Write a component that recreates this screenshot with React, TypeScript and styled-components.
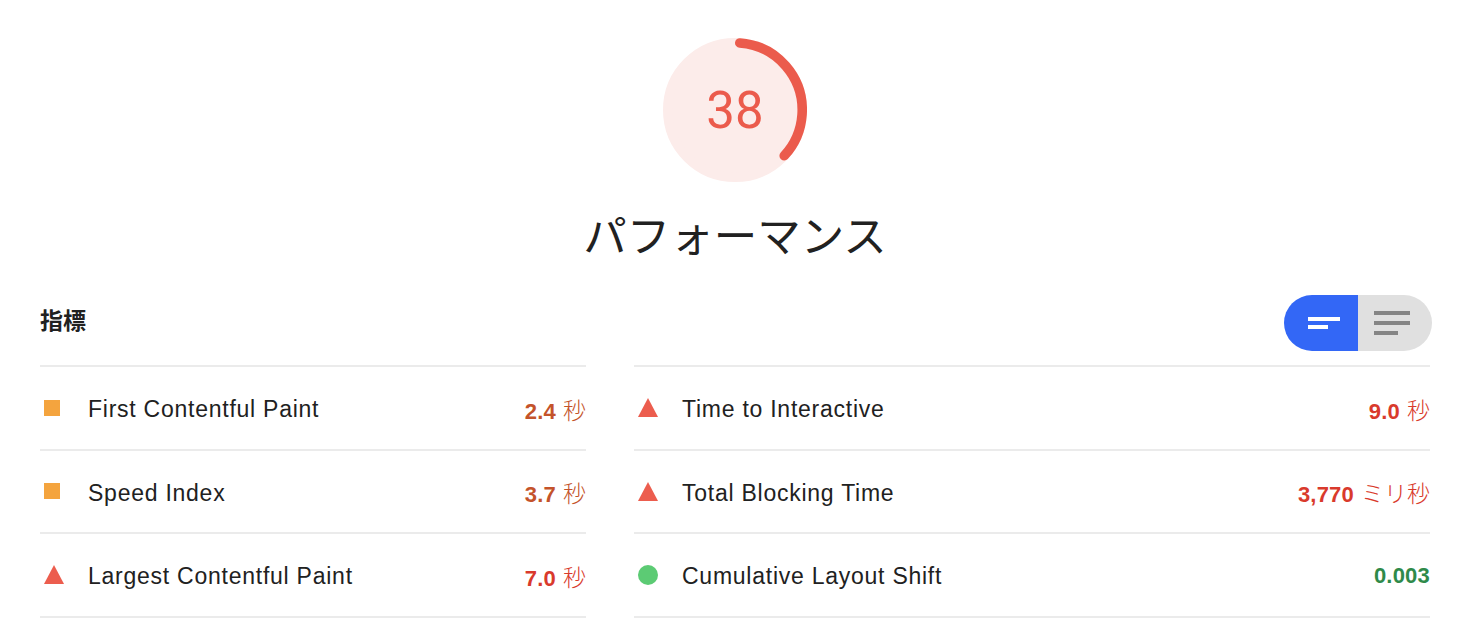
import React from "react";
import styled, { createGlobalStyle } from "styled-components";

const GlobalStyle = createGlobalStyle`
  html, body { margin: 0; padding: 0; background: #ffffff; }
  body {
    font-family: "Liberation Sans", Arial, "Noto Sans CJK JP", sans-serif;
    color: #212121;
  }
`;

const Page = styled.div`
  width: 1392px;
  margin-left: 40px;
  padding-top: 38px;
  display: flex;
  flex-direction: column;
`;

const Header = styled.div`
  display: flex;
  flex-direction: column;
  align-items: center;
  width: 1390px;
`;

const GaugeWrap = styled.div`
  position: relative;
  width: 144px;
  height: 144px;
`;

const GaugeSvg = styled.svg`
  display: block;
  width: 144px;
  height: 144px;
`;

const GaugeNumber = styled.div`
  position: absolute;
  inset: 0;
  display: flex;
  align-items: center;
  justify-content: center;
  font-family: Roboto, "Noto Sans", sans-serif;
  font-size: 51px;
  color: #eb5b4c;
  padding-top: 1px;
`;

const CategoryTitle = styled.h1`
  margin: 25px 0 0;
  font-family: "Noto Sans CJK JP", "Noto Sans", sans-serif;
  font-weight: 400;
  font-size: 43.5px;
  line-height: 54px;
  color: #212121;
`;

const MetricsHeader = styled.div`
  margin-top: 34px;
  display: flex;
  align-items: center;
  justify-content: space-between;
  height: 56px;
`;

const SectionTitle = styled.h2`
  margin: 0;
  font-family: "Liberation Sans", "Noto Sans CJK JP", sans-serif;
  font-size: 23px;
  font-weight: 700;
  color: #212121;
  position: relative;
  top: -4px;
`;

const Toggle = styled.div`
  display: flex;
  width: 148px;
  height: 56px;
  border-radius: 28px;
  overflow: hidden;
`;

const ToggleHalf = styled.button<{ $active?: boolean }>`
  flex: 1;
  border: 0;
  margin: 0;
  padding: ${(p) => (p.$active ? "0 0 0 6px" : "0 6px 0 0")};
  background: ${(p) => (p.$active ? "#3367f6" : "#e0e0e0")};
  display: flex;
  align-items: center;
  justify-content: center;
  cursor: pointer;
`;

const Grid = styled.div`
  margin-top: 14px;
  display: grid;
  grid-template-columns: 546px 796px;
  column-gap: 48px;
`;

const Column = styled.div`
  border-top: 2px solid #ebebeb;
`;

const Row = styled.div`
  display: flex;
  align-items: center;
  height: 81.5px;
  border-bottom: 2px solid #ebebeb;
`;

const IconBox = styled.div`
  width: 20px;
  margin-left: 4px;
  margin-right: 24px;
  display: flex;
  align-items: center;
`;

const Square = styled.span`
  display: block;
  width: 16px;
  height: 16px;
  background: #f4a43e;
`;

const Triangle = styled.span`
  display: block;
  width: 0;
  height: 0;
  border-left: 10px solid transparent;
  border-right: 10px solid transparent;
  border-bottom: 19px solid #ec5d4e;
`;

const Dot = styled.span`
  display: block;
  width: 20px;
  height: 20px;
  border-radius: 50%;
  background: #5ccb74;
`;

const Label = styled.span`
  flex: 1;
  font-size: 23px;
  letter-spacing: 0.75px;
  color: #212121;
  white-space: nowrap;
  position: relative;
  top: 2px;
`;

const Value = styled.span<{ $color: string }>`
  font-size: 22px;
  color: ${(p) => p.$color};
  white-space: nowrap;
  position: relative;
  top: 1px;
`;

const Num = styled.span`
  font-weight: 700;
  letter-spacing: 0.2px;
`;

const Unit = styled.span`
  font-family: "Noto Sans CJK JP", sans-serif;
  font-weight: 300;
  font-size: 23px;
  margin-left: 7px;
`;

type Rating = "average" | "fail" | "pass";

const colors: Record<Rating, string> = {
  average: "#c4532a",
  fail: "#d93a2c",
  pass: "#2f8a4a",
};

const Icon = ({ rating }: { rating: Rating }) => (
  <IconBox>
    {rating === "average" ? <Square /> : rating === "fail" ? <Triangle /> : <Dot />}
  </IconBox>
);

type Metric = { label: string; num: string; unit?: string; rating: Rating };

const left: Metric[] = [
  { label: "First Contentful Paint", num: "2.4", unit: "秒", rating: "average" },
  { label: "Speed Index", num: "3.7", unit: "秒", rating: "average" },
  { label: "Largest Contentful Paint", num: "7.0", unit: "秒", rating: "fail" },
];

const right: Metric[] = [
  { label: "Time to Interactive", num: "9.0", unit: "秒", rating: "fail" },
  { label: "Total Blocking Time", num: "3,770", unit: "ミリ秒", rating: "fail" },
  { label: "Cumulative Layout Shift", num: "0.003", rating: "pass" },
];

const MetricRow = ({ m }: { m: Metric }) => (
  <Row>
    <Icon rating={m.rating} />
    <Label>{m.label}</Label>
    <Value $color={colors[m.rating]}>
      <Num>{m.num}</Num>
      {m.unit && <Unit>{m.unit}</Unit>}
    </Value>
  </Row>
);

const Gauge = ({ score }: { score: number }) => {
  const r = 56;
  const c = 2 * Math.PI * r;
  const dash = Math.max((score / 100) * c - 8, 0);
  const rot = -90 + (4 / c) * 360;
  return (
    <GaugeWrap>
      <GaugeSvg viewBox="0 0 120 120">
        <circle cx="60" cy="60" r={r} fill="#fcecea" stroke="#fcecea" strokeWidth="8" />
        <circle
          cx="60"
          cy="60"
          r={r}
          fill="none"
          stroke="#eb5b4c"
          strokeWidth="8"
          strokeLinecap="round"
          strokeDasharray={`${dash} ${c}`}
          transform={`rotate(${rot} 60 60)`}
        />
      </GaugeSvg>
      <GaugeNumber>{score}</GaugeNumber>
    </GaugeWrap>
  );
};

const ListIconActive = () => (
  <svg width="32" height="12" viewBox="0 0 32 12">
    <rect x="0" y="0" width="32" height="4" fill="#ffffff" />
    <rect x="0" y="8" width="20" height="4" fill="#ffffff" />
  </svg>
);

const ListIconInactive = () => (
  <svg width="36" height="24" viewBox="0 0 36 24">
    <rect x="0" y="0" width="36" height="4" fill="#858585" />
    <rect x="0" y="10" width="36" height="4" fill="#858585" />
    <rect x="0" y="20" width="24" height="4" fill="#858585" />
  </svg>
);

export default function App() {
  return (
    <>
      <GlobalStyle />
      <Page>
        <Header>
          <Gauge score={38} />
          <CategoryTitle>パフォーマンス</CategoryTitle>
        </Header>
        <MetricsHeader>
          <SectionTitle>指標</SectionTitle>
          <Toggle>
            <ToggleHalf $active aria-label="compact">
              <ListIconActive />
            </ToggleHalf>
            <ToggleHalf aria-label="expanded">
              <ListIconInactive />
            </ToggleHalf>
          </Toggle>
        </MetricsHeader>
        <Grid>
          <Column>
            {left.map((m) => (
              <MetricRow key={m.label} m={m} />
            ))}
          </Column>
          <Column>
            {right.map((m) => (
              <MetricRow key={m.label} m={m} />
            ))}
          </Column>
        </Grid>
      </Page>
    </>
  );
}
